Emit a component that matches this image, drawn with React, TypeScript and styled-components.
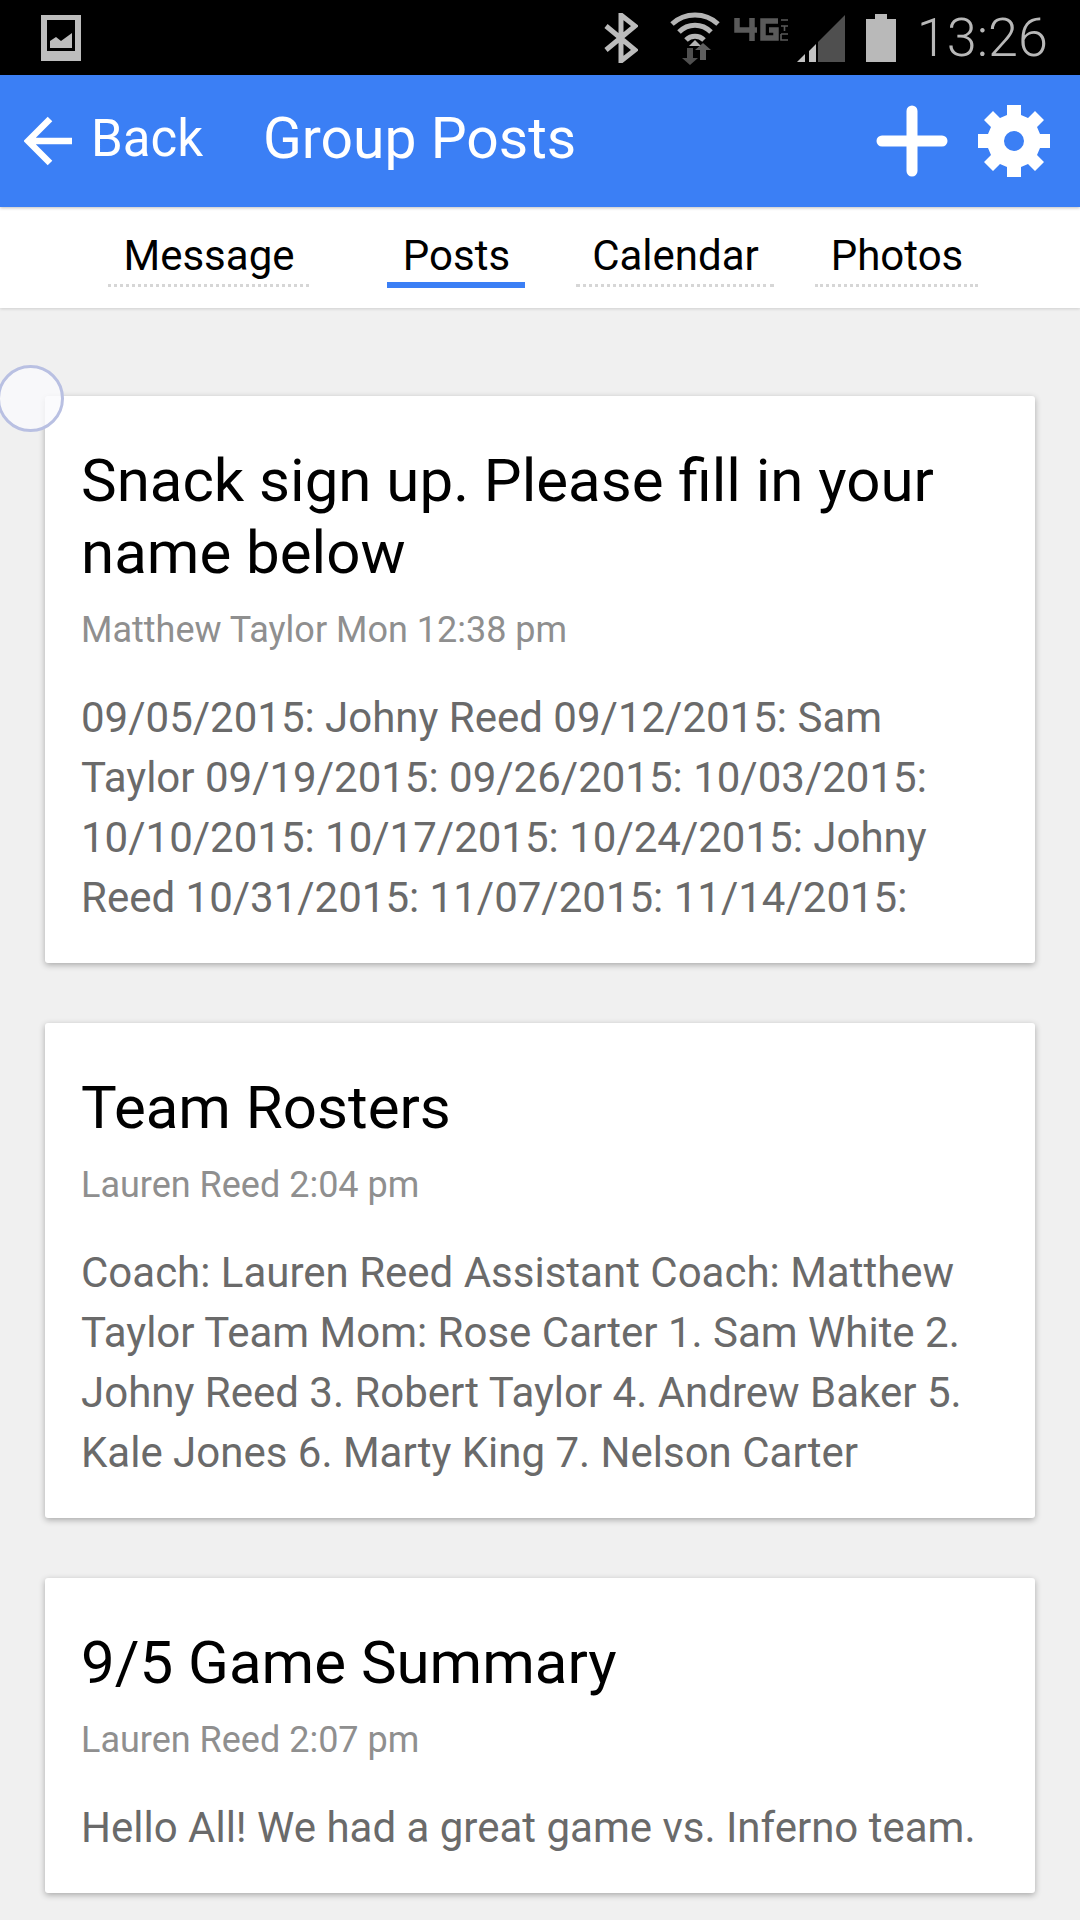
import type { FC } from "react";
import styled, { createGlobalStyle } from "styled-components";

const GlobalStyle = createGlobalStyle`
  html, body {
    margin: 0;
    padding: 0;
    background: #f0f0f0;
  }
  * {
    box-sizing: border-box;
  }
`;

const Page = styled.div`
  position: relative;
  width: 1080px;
  height: 1920px;
  overflow: hidden;
  background: #f0f0f0;
  font-family: Roboto, "Liberation Sans", sans-serif;
`;

const StatusBar = styled.div`
  height: 75px;
  background: #000;
  display: flex;
  align-items: center;
  padding: 0 32px 0 41px;
`;

const StatusIcons = styled.div`
  margin-left: auto;
  display: flex;
  align-items: center;
`;

const Clock = styled.span`
  font-size: 54px;
  font-weight: 300;
  color: #b8b8b8;
  margin-left: 21px;
  line-height: 75px;
`;

const Header = styled.header`
  height: 132px;
  background: #3b7ff5;
  display: flex;
  align-items: center;
  padding: 0 30px 0 24px;
  color: #fff;
  position: relative;
  z-index: 2;
  box-shadow: 0 1px 3px rgba(0, 0, 0, 0.25);
`;

const BackText = styled.span`
  font-size: 51px;
  margin: 0 0 5px 19px;
  width: 172px;
`;

const Title = styled.h1`
  margin: 0 0 5px;
  font-size: 57px;
  font-weight: 400;
`;

const HeaderActions = styled.div`
  margin-left: auto;
  display: flex;
  align-items: center;
  gap: 30px;
`;

const Tabs = styled.nav`
  height: 101px;
  background: #fff;
  display: flex;
  padding-left: 108px;
  box-shadow: 0 1px 3px rgba(0, 0, 0, 0.14);
`;

const Tab = styled.div<{ $width: number; $gap: number; $active?: boolean }>`
  width: ${(p) => p.$width}px;
  margin-right: ${(p) => p.$gap}px;
  height: ${(p) => (p.$active ? 81 : 80)}px;
  font-size: 42px;
  color: #000;
  text-align: center;
  text-indent: 1px;
  line-height: 97px;
  border-bottom: ${(p) =>
    p.$active ? "6px solid #3b7ff5" : "3px dotted #d6d6d6"};
`;

const Feed = styled.main`
  padding: 88px 45px 0;
  display: flex;
  flex-direction: column;
  gap: 60px;
`;

const Card = styled.article`
  background: #fff;
  border-radius: 3px;
  padding: 49px 36px 35px;
  box-shadow: 0 2px 6px rgba(0, 0, 0, 0.3);
`;

const CardTitle = styled.h2`
  margin: 0;
  font-size: 60px;
  line-height: 72px;
  font-weight: 400;
  color: #000;
`;

const Meta = styled.div`
  margin-top: 15px;
  font-size: 36px;
  line-height: 52px;
  color: #8f8f8f;
`;

const Body = styled.p`
  margin: 32px 0 0;
  font-size: 42px;
  line-height: 60px;
  color: #6a6a6a;
`;

const TouchDot = styled.div`
  position: absolute;
  left: -3px;
  top: 365px;
  width: 67px;
  height: 67px;
  border-radius: 50%;
  background: rgba(250, 250, 252, 0.8);
  border: 3px solid #b9c0e2;
  filter: blur(0.7px);
  z-index: 3;
`;

const Svg = styled.svg<{ $ml?: number }>`
  display: block;
  margin-left: ${(p) => p.$ml ?? 0}px;
`;

const GalleryIcon: FC = () => (
  <Svg width="40" height="46" viewBox="0 0 40 46">
    <path fill="#bdbdbd" fillRule="evenodd" d="M0 0h40v46H0zM6 5v31h28V5z" />
    <path fill="#bdbdbd" d="M9 33v-7l6-4 5 4 11-8v15z" />
    <rect x="6" y="5" width="28" height="2" fill="#000" />
  </Svg>
);

const BluetoothIcon: FC = () => (
  <Svg width="34" height="50" viewBox="0 0 34 50">
    <path
      fill="none"
      stroke="#bcbcbc"
      strokeWidth="5"
      d="M2 13l29 24-14 11V2l14 11L2 37"
    />
  </Svg>
);

const WifiIcon: FC = () => (
  <Svg $ml={32} width="50" height="54" viewBox="0 0 50 54">
    <g fill="none" stroke="#b5b5b5" strokeWidth="5">
      <path d="M2 13C15 1 35 1 48 13" />
      <path d="M9 21C18 12 32 12 41 21" />
      <path d="M16 29C21 24 29 24 34 29" />
    </g>
    <path fill="#b5b5b5" d="M19 35l6-6 6 6z" />
    <path fill="#4f4f4f" d="M17 37h6v10h5l-8 7-8-7h5z" />
    <path fill="#5f5f5f" d="M30 49h6V39h5l-8-7-8 7h5z" />
  </Svg>
);

const NetworkIcon: FC = () => (
  <Svg $ml={14} width="55" height="46" viewBox="0 0 55 46">
    <g fill="none" stroke="#5a5a5a" strokeWidth="5.5">
      <path d="M3 3v12h20M18 3v23" />
      <path d="M44 6H29v17h13v-8h-7" />
    </g>
    <g fill="none" stroke="#5a5a5a" strokeWidth="1.6">
      <path d="M47 5h7M47 11h7M50.5 11v5M47 19h7M47 19v6h7" />
    </g>
  </Svg>
);

const SignalIcon: FC = () => (
  <Svg $ml={8} width="48" height="50" viewBox="0 0 48 50">
    <path fill="#4f4f4f" d="M48 2v47H21V29z" />
    <path fill="#c2c2c2" d="M12 38l7-7v18h-7zM0 49l8-8v8z" />
  </Svg>
);

const BatteryIcon: FC = () => (
  <Svg $ml={21} width="30" height="48" viewBox="0 0 30 48">
    <path fill="#b9b9b9" d="M9 0h12v5h9v43H0V5h9z" />
  </Svg>
);

const BackArrow: FC = () => (
  <Svg width="48" height="50" viewBox="0 0 48 50">
    <path
      fill="none"
      stroke="#fff"
      strokeWidth="6.5"
      d="M48 25H6M26 3L4 25l22 22"
    />
  </Svg>
);

const PlusIcon: FC = () => (
  <Svg width="72" height="72" viewBox="0 0 72 72">
    <path
      fill="none"
      stroke="#fff"
      strokeWidth="11"
      strokeLinecap="round"
      d="M36 6v60M6 36h60"
    />
  </Svg>
);

const GearIcon: FC = () => (
  <Svg width="72" height="72" viewBox="0 0 72 72">
    <path
      fill="#fff"
      fillRule="evenodd"
      d="M29 0h14v10l7 3 7-7 9 9-7 7 3 7h10v14H62l-3 7 7 7-9 9-7-7-7 3v10H29V62l-7-3-7 7-9-9 7-7-3-7H0V29h10l3-7-7-7 9-9 7 7 7-3zM36 26a10 10 0 1 0 0 20 10 10 0 1 0 0-20z"
    />
  </Svg>
);

const posts = [
  {
    title: "Snack sign up. Please fill in your name below",
    meta: "Matthew Taylor Mon 12:38 pm",
    body: "09/05/2015: Johny Reed 09/12/2015: Sam Taylor 09/19/2015: 09/26/2015: 10/03/2015: 10/10/2015: 10/17/2015: 10/24/2015: Johny Reed 10/31/2015: 11/07/2015: 11/14/2015:",
  },
  {
    title: "Team Rosters",
    meta: "Lauren Reed 2:04 pm",
    body: "Coach: Lauren Reed Assistant Coach: Matthew Taylor Team Mom: Rose Carter 1. Sam White 2. Johny Reed 3. Robert Taylor 4. Andrew Baker 5. Kale Jones 6. Marty King 7. Nelson Carter",
  },
  {
    title: "9/5 Game Summary",
    meta: "Lauren Reed 2:07 pm",
    body: "Hello All! We had a great game vs. Inferno team.",
  },
];

const App: FC = () => {
  return (
    <Page>
      <GlobalStyle />
      <StatusBar>
        <GalleryIcon />
        <StatusIcons>
          <BluetoothIcon />
          <WifiIcon />
          <NetworkIcon />
          <SignalIcon />
          <BatteryIcon />
          <Clock>13:26</Clock>
        </StatusIcons>
      </StatusBar>
      <Header>
        <BackArrow />
        <BackText>Back</BackText>
        <Title>Group Posts</Title>
        <HeaderActions>
          <PlusIcon />
          <GearIcon />
        </HeaderActions>
      </Header>
      <Tabs>
        <Tab $width={201} $gap={78}>Message</Tab>
        <Tab $width={138} $gap={51} $active>Posts</Tab>
        <Tab $width={198} $gap={41}>Calendar</Tab>
        <Tab $width={163} $gap={0}>Photos</Tab>
      </Tabs>
      <Feed>
        {posts.map((post) => (
          <Card key={post.title}>
            <CardTitle>{post.title}</CardTitle>
            <Meta>{post.meta}</Meta>
            <Body>{post.body}</Body>
          </Card>
        ))}
      </Feed>
      <TouchDot />
    </Page>
  );
};

export default App;
